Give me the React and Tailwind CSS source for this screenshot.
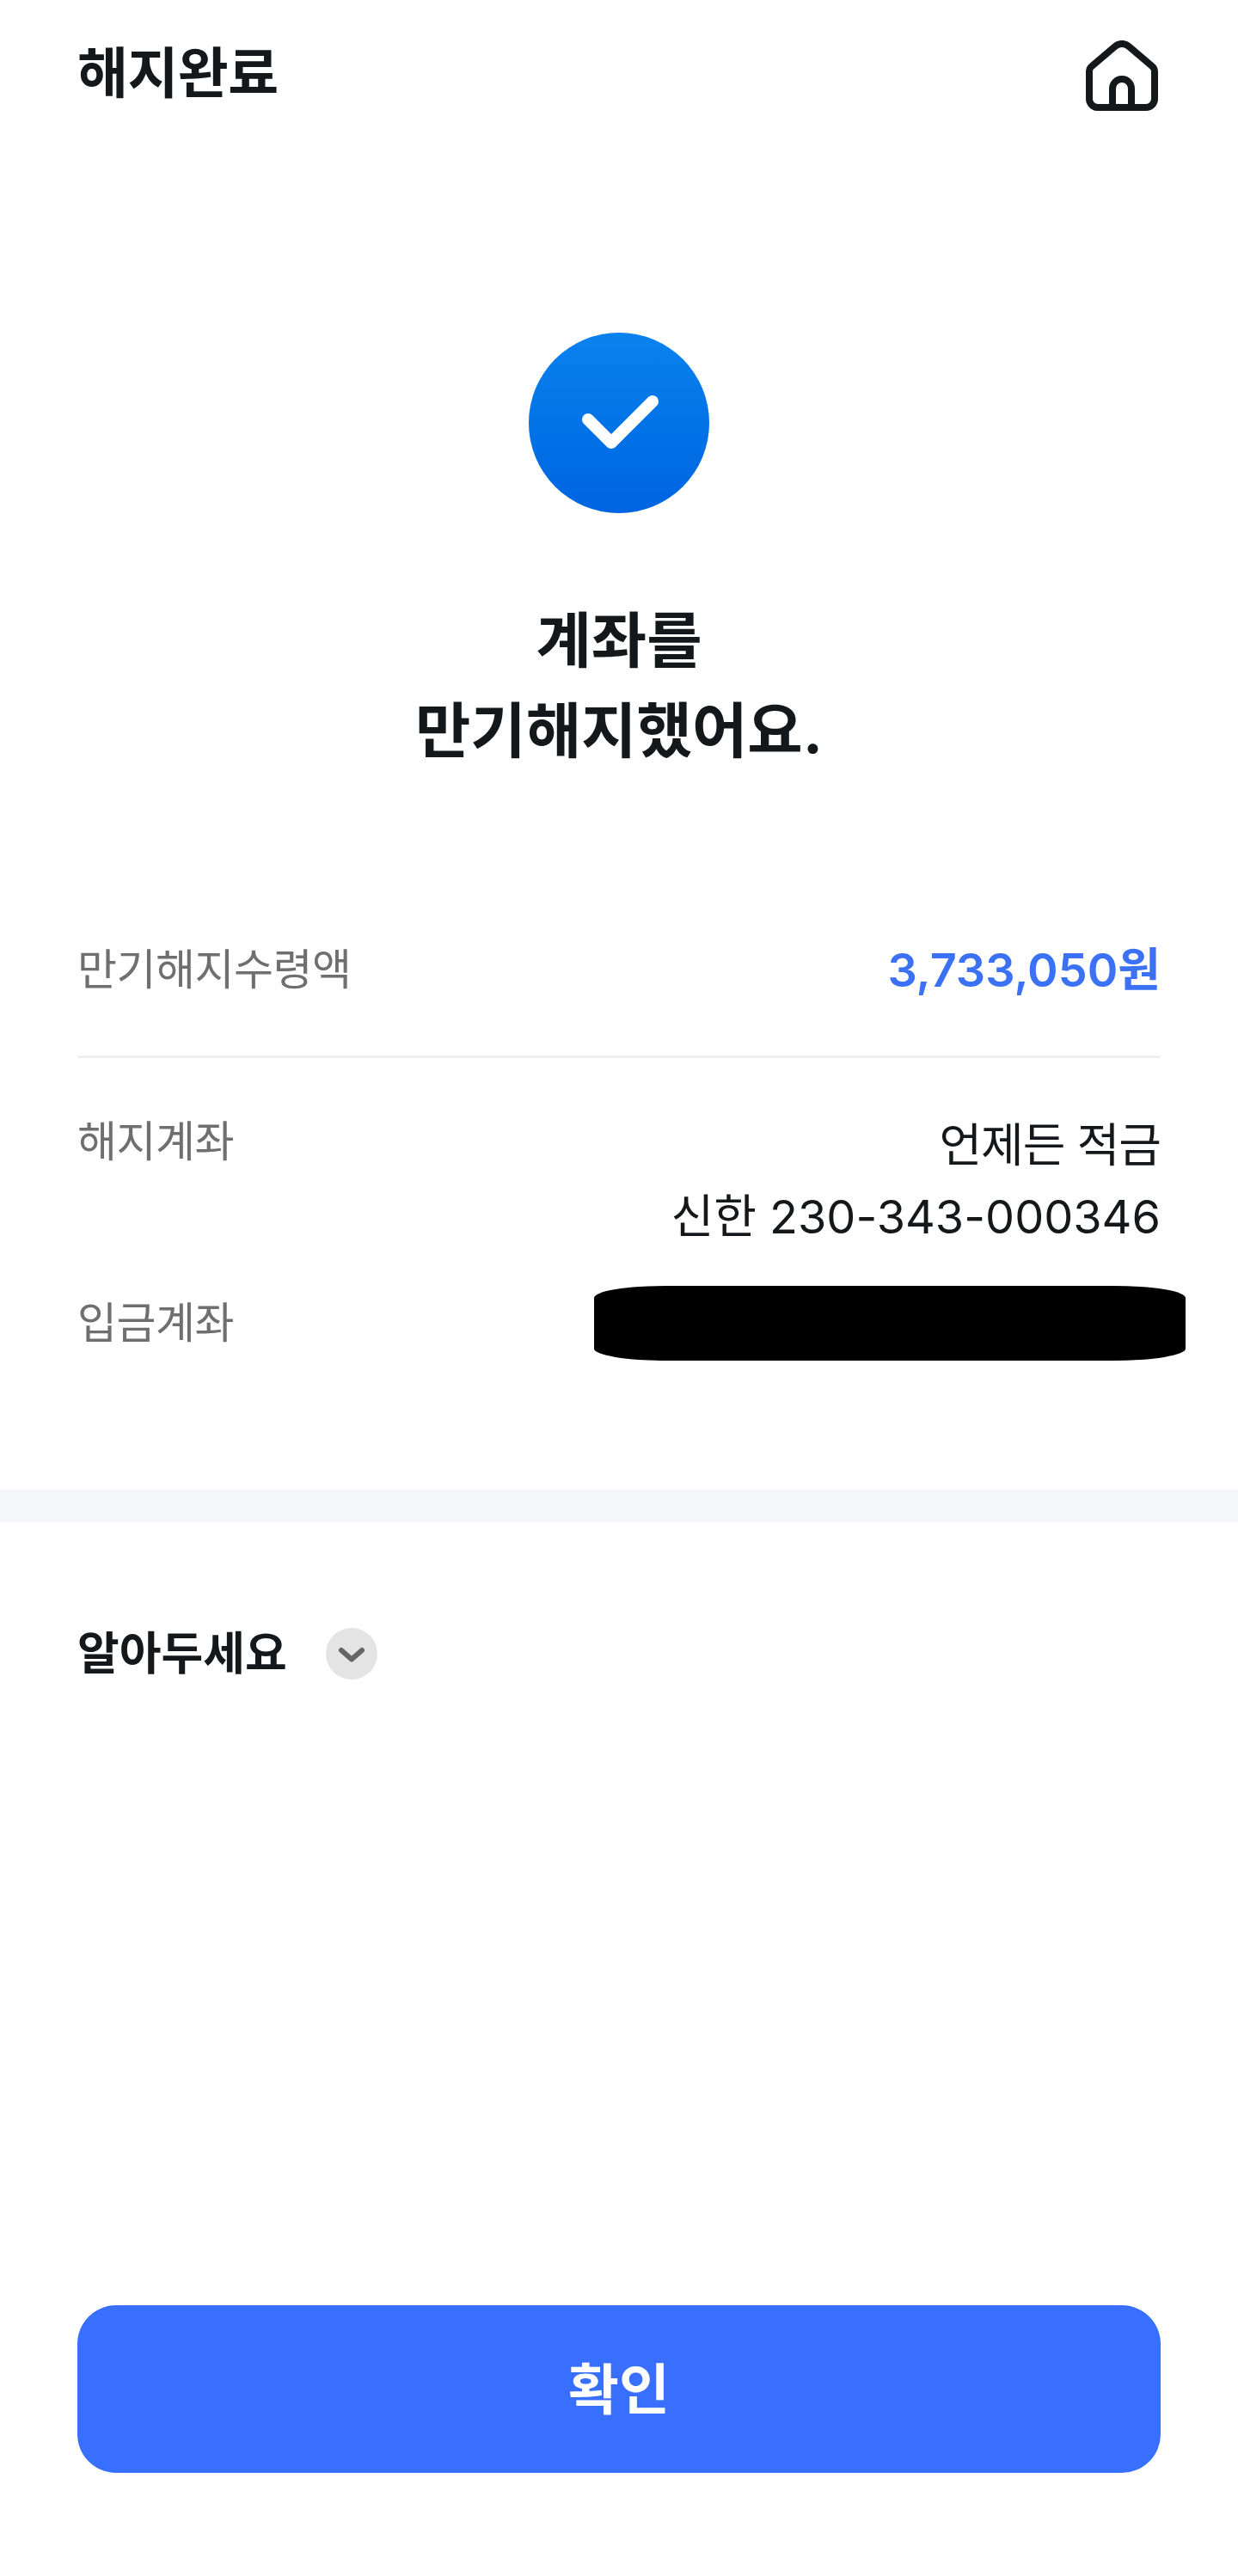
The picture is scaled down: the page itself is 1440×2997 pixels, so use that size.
import React from 'react';

function HomeIcon() {
  return (
    <svg className="mt-[6px]" width="84" height="82" viewBox="0 0 84 82" fill="none" stroke="#14181b" strokeWidth="8" strokeLinejoin="round">
      <path d="M14 78H70a10 10 0 0 0 10-10V36a8 8 0 0 0-3-6L50 7a12 12 0 0 0-16 0L7 30a8 8 0 0 0-3 6V68a10 10 0 0 0 10 10Z" />
      <path d="M31 78V56a11 11 0 0 1 22 0V78" />
    </svg>
  );
}

function CheckBadge() {
  return (
    <div className="w-[210px] h-[210px] rounded-full bg-linear-to-b from-[#0a82ee] to-[#0064e1]">
      <svg width="210" height="210" viewBox="0 0 210 210" fill="none" stroke="#ffffff" strokeWidth="14" strokeLinecap="round" strokeLinejoin="round">
        <path d="M69 101L96 128L144 80" />
      </svg>
    </div>
  );
}

function App() {
  return (
    <div className="flex flex-col min-h-[2997px] bg-white text-[#14181b] font-['Inter','Noto_Sans_CJK_KR',sans-serif]">
      <header className="flex items-center justify-between h-[170px] pl-[90px] pr-[93px]">
        <h1 className="text-[64px] leading-[80px] font-bold tracking-[-0.5px]">해지완료</h1>
        <HomeIcon />
      </header>

      <div className="flex justify-center mt-[217px]">
        <CheckBadge />
      </div>

      <h2 className="mt-[96px] text-center text-[70px] leading-[105px] font-bold">
        계좌를
        <br />
        만기해지했어요.
      </h2>

      <section className="mt-[175px] px-[90px]">
        <div className="flex items-center justify-between h-[100px] mb-[50px]">
          <span className="text-[50px] tracking-[-0.5px] text-[#6f6f6f]">만기해지수령액</span>
          <span className="text-[54px] font-semibold text-[#3b71f5]">3,733,050원</span>
        </div>

        <div className="h-[3px] bg-[#f0f0f0]"></div>

        <div className="flex items-start justify-between mt-[58px]">
          <span className="text-[50px] leading-[78px] tracking-[-0.5px] text-[#6f6f6f]">해지계좌</span>
          <div className="pt-[2px] text-right text-[54px] leading-[83px]">
            <div className="tracking-[-1px]">언제든 적금</div>
            <div>신한 230-343-000346</div>
          </div>
        </div>

        <div className="flex items-center justify-between mt-[39px] h-[87px]">
          <span className="text-[50px] tracking-[-0.5px] text-[#6f6f6f]">입금계좌</span>
          <div className="w-[688px] h-[87px] -mr-[29px] bg-black rounded-[85px/14px]"></div>
        </div>
      </section>

      <div className="h-[38px] mt-[150px] bg-[#f6f7fb]"></div>

      <div className="flex items-center gap-[45px] mt-[123px] px-[90px]">
        <span className="text-[53px] leading-[60px] font-bold">알아두세요</span>
        <div className="flex items-center justify-center w-[60px] h-[60px] rounded-full bg-[#e4e4e4]">
          <svg width="60" height="60" viewBox="0 0 60 60" fill="none" stroke="#666666" strokeWidth="6" strokeLinecap="round" strokeLinejoin="round">
            <path d="M18 26L30 36.5L42 26" />
          </svg>
        </div>
      </div>

      <div className="mt-auto px-[90px] pb-[120px]">
        <button className="w-full h-[195px] rounded-[45px] bg-[#386ffe] text-white text-[64px] font-bold">확인</button>
      </div>
    </div>
  );
}

export default App;
